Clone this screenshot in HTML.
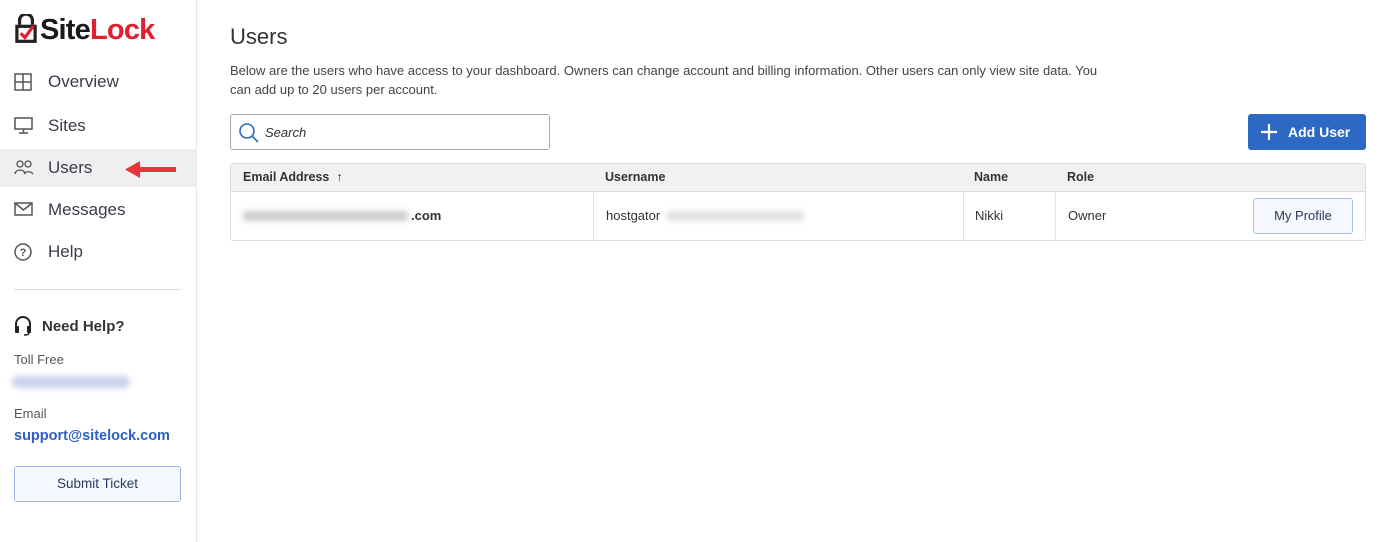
<!DOCTYPE html>
<html><head><meta charset="utf-8"><style>
*{box-sizing:border-box;margin:0;padding:0}
body{width:1400px;height:542px;overflow:hidden;background:#fff;font-family:"Liberation Sans",sans-serif;color:#333;position:relative}
.sb{position:absolute;left:0;top:0;width:197px;height:542px;border-right:1px solid #e6e6e6;background:#fff}
.logo{position:absolute;left:14px;top:14px;font-weight:bold;font-size:29px;letter-spacing:-0.8px;line-height:32px}
.nav{position:absolute;left:0;width:197px;height:38px;font-size:17px;color:#3a3a4a;line-height:38px}
.nav span{position:absolute;left:48px}
.nav svg{position:absolute;left:14px;top:10px}
.main{position:absolute;left:230px}
</style></head><body>
<div class="sb">
 <div class="logo"><svg width="24" height="30" viewBox="0 0 22 28" style="position:absolute;left:0;top:0"><path d="M5 10V6a6 6 0 0 1 12 0v4" fill="none" stroke="#222" stroke-width="3"/><rect x="1" y="10" width="20" height="17" fill="#222"/><rect x="4" y="13" width="14" height="11" fill="#fff"/><path d="M6 18l4 4 8-11" fill="none" stroke="#e0202e" stroke-width="3"/></svg><span style="margin-left:26px;color:#1a1a1a">Site</span><span style="color:#e0202e">Lock</span></div>
 <div class="nav" style="top:63px"><svg width="18" height="18"><rect x="1" y="1" width="16" height="16" fill="none" stroke="#555" stroke-width="1.5"/><path d="M9 1v16M1 9h16" stroke="#555" stroke-width="1.5"/></svg><span>Overview</span></div>
 <div class="nav" style="top:107px"><svg width="20" height="18"><rect x="1" y="1" width="17" height="11" fill="none" stroke="#555" stroke-width="1.5"/><path d="M9.5 12v4M5 16h9" stroke="#555" stroke-width="1.5"/></svg><span>Sites</span></div>
 <div class="nav" style="top:149px;background:#efefef"><svg width="20" height="18"><circle cx="6" cy="5" r="3" fill="none" stroke="#555" stroke-width="1.3"/><circle cx="14" cy="5" r="3" fill="none" stroke="#555" stroke-width="1.3"/><path d="M1 15a5 4 0 0 1 10 0M10 15a5 4 0 0 1 9 0" fill="none" stroke="#555" stroke-width="1.3"/></svg><span>Users</span>
 <svg width="60" height="20" style="left:122px;top:10px"><path d="M16 8h38v5H16z" fill="#e8333a"/><path d="M3 10.5L18 2v17z" fill="#e8333a"/></svg></div>
 <div class="nav" style="top:191px"><svg width="20" height="18"><rect x="1" y="2" width="17" height="12" fill="none" stroke="#555" stroke-width="1.5"/><path d="M1 2l8.5 7 8.5-7" fill="none" stroke="#555" stroke-width="1.5"/></svg><span>Messages</span></div>
 <div class="nav" style="top:233px"><svg width="20" height="20"><circle cx="9" cy="9" r="8" fill="none" stroke="#555" stroke-width="1.5"/><text x="9" y="13" font-size="11" text-anchor="middle" fill="#555" font-family="Liberation Sans" font-weight="bold">?</text></svg><span>Help</span></div>
 <div style="position:absolute;left:14px;top:289px;width:167px;border-top:1px solid #ddd"></div>
 <svg width="18" height="20" style="position:absolute;left:14px;top:316px"><path d="M2 11V8a7 7 0 0 1 14 0v3" fill="none" stroke="#222" stroke-width="2"/><rect x="1" y="10" width="4" height="7" rx="1" fill="#222"/><rect x="13" y="10" width="4" height="7" rx="1" fill="#222"/><path d="M15 17q0 2-5 2" fill="none" stroke="#222" stroke-width="1.5"/></svg>
 <div style="position:absolute;left:42px;top:318px;font-size:15px;font-weight:bold;color:#333">Need Help?</div>
 <div style="position:absolute;left:14px;top:352px;font-size:13px;color:#555">Toll Free</div>
 <div style="position:absolute;left:12px;top:376px;width:118px;height:12px;background:#c9d3ec;border-radius:6px;filter:blur(3px)"></div>
 <div style="position:absolute;left:14px;top:406px;font-size:13px;color:#555">Email</div>
 <div style="position:absolute;left:14px;top:428px;font-size:14.5px;font-weight:bold;color:#2d5fbf">support@sitelock.com</div>
 <div style="position:absolute;left:14px;top:466px;width:167px;height:36px;border:1px solid #9db8e6;border-radius:3px;background:#f5f8fe;text-align:center;line-height:34px;font-size:13.5px;color:#2a3a5a">Submit Ticket</div>
</div>
<div class="main" style="top:24px;font-size:22px;color:#333">Users</div>
<div class="main" style="top:61px;width:880px;font-size:13px;line-height:19px;color:#444">Below are the users who have access to your dashboard. Owners can change account and billing information. Other users can only view site data. You can add up to 20 users per account.</div>
<div class="main" style="top:114px;width:320px;height:36px;border:1px solid #aaa;border-radius:3px">
 <svg width="22" height="22" style="position:absolute;left:7px;top:7px"><circle cx="9" cy="9" r="7" fill="none" stroke="#2d68c4" stroke-width="1.6"/><path d="M14 14l6 6" stroke="#2d68c4" stroke-width="1.6"/></svg>
 <span style="position:absolute;left:34px;top:10px;font-size:13px;font-style:italic;color:#333">Search</span></div>
<div style="position:absolute;left:1248px;top:114px;width:118px;height:36px;background:#2d68c4;border-radius:3px;color:#fff;font-size:14px;font-weight:bold;line-height:36px">
 <svg width="18" height="18" style="position:absolute;left:12px;top:9px"><path d="M9 1v16M1 9h16" stroke="#fff" stroke-width="2.2"/></svg><span style="position:absolute;left:40px">Add User</span></div>
<div class="main" style="top:163px;width:1136px;height:78px;border:1px solid #ddd;border-radius:3px;overflow:hidden;font-size:13px">
 <div style="height:28px;background:#f1f1f1;border-bottom:1px solid #ddd;font-weight:bold;color:#333;position:relative;font-size:12.5px">
  <span style="position:absolute;left:12px;top:6px">Email Address &nbsp;↑</span>
  <span style="position:absolute;left:374px;top:6px">Username</span>
  <span style="position:absolute;left:743px;top:6px">Name</span>
  <span style="position:absolute;left:836px;top:6px">Role</span></div>
 <div style="position:relative;height:48px">
  <div style="position:absolute;left:362px;top:0;height:48px;border-left:1px solid #e3e3e3"></div>
  <div style="position:absolute;left:732px;top:0;height:48px;border-left:1px solid #e3e3e3"></div>
  <div style="position:absolute;left:824px;top:0;height:48px;border-left:1px solid #e3e3e3"></div>
  <div style="position:absolute;left:12px;top:19px;width:165px;height:10px;background:#cfcfcf;filter:blur(3px)"></div>
  <span style="position:absolute;left:180px;top:16px;font-weight:bold">.com</span>
  <span style="position:absolute;left:375px;top:16px">hostgator</span>
  <div style="position:absolute;left:436px;top:19px;width:136px;height:10px;background:#e0e0e0;filter:blur(3px)"></div>
  <span style="position:absolute;left:744px;top:16px">Nikki</span>
  <span style="position:absolute;left:837px;top:16px">Owner</span>
  <div style="position:absolute;left:1022px;top:6px;width:100px;height:36px;border:1px solid #a9c0e8;border-radius:3px;background:#f5f8fe;text-align:center;line-height:34px;color:#2a3a5a">My Profile</div>
 </div></div>
</body></html>
